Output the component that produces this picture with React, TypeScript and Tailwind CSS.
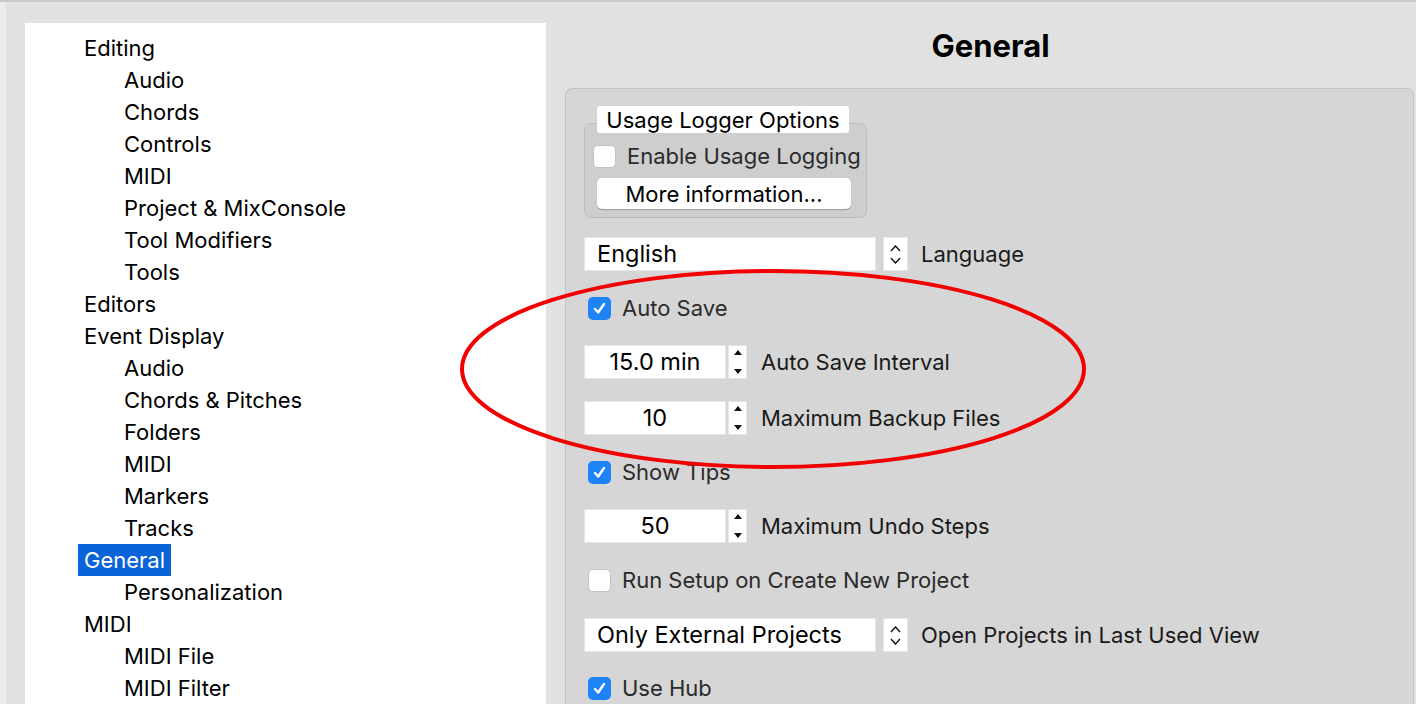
import React from "react";

type NavItem = { label: string; level: 0 | 1; selected?: boolean };

const nav: NavItem[] = [
  { label: "Editing", level: 0 },
  { label: "Audio", level: 1 },
  { label: "Chords", level: 1 },
  { label: "Controls", level: 1 },
  { label: "MIDI", level: 1 },
  { label: "Project & MixConsole", level: 1 },
  { label: "Tool Modifiers", level: 1 },
  { label: "Tools", level: 1 },
  { label: "Editors", level: 0 },
  { label: "Event Display", level: 0 },
  { label: "Audio", level: 1 },
  { label: "Chords & Pitches", level: 1 },
  { label: "Folders", level: 1 },
  { label: "MIDI", level: 1 },
  { label: "Markers", level: 1 },
  { label: "Tracks", level: 1 },
  { label: "General", level: 0, selected: true },
  { label: "Personalization", level: 1 },
  { label: "MIDI", level: 0 },
  { label: "MIDI File", level: 1 },
  { label: "MIDI Filter", level: 1 },
];

function Checkbox({ checked }: { checked?: boolean }) {
  if (checked) {
    return (
      <span className="flex h-[23px] w-[23px] shrink-0 items-center justify-center rounded-[5px] bg-[#1d83f6]">
        <svg width="15" height="15" viewBox="0 0 15 15">
          <path d="M3 8 L6.2 11.5 L12 3" fill="none" stroke="#fff" strokeWidth="2.4" strokeLinecap="round" strokeLinejoin="round" />
        </svg>
      </span>
    );
  }
  return <span className="h-[23px] w-[23px] shrink-0 rounded-[5px] border border-[#c2c2c2] bg-white" />;
}

function CheckRow({ label, checked }: { label: string; checked?: boolean }) {
  return (
    <div className="flex h-[34px] items-center gap-[11px] pl-[4px]">
      <Checkbox checked={checked} />
      <span className="text-[#2b2b2b]">{label}</span>
    </div>
  );
}

function SpinRow({ value, label }: { value: string; label: string }) {
  return (
    <div className="flex h-[34px] items-center">
      <div className="flex h-full w-[142px] items-center justify-center border border-[#e6e6e6] bg-white text-[23.5px] text-black">{value}</div>
      <div className="ml-[2px] flex h-full w-[19px] flex-col items-center justify-between border border-[#e6e6e6] bg-white py-[4px]">
        <svg width="8" height="5" viewBox="0 0 8 5">
          <path d="M0 5 L4 0 L8 5 Z" fill="#111" />
        </svg>
        <svg width="8" height="5" viewBox="0 0 8 5">
          <path d="M0 0 L4 5 L8 0 Z" fill="#111" />
        </svg>
      </div>
      <span className="ml-[14px] text-[#1a1a1a]">{label}</span>
    </div>
  );
}

function SelectRow({ value, label }: { value: string; label: string }) {
  return (
    <div className="flex h-[34px] items-center">
      <div className="flex h-full w-[292px] items-center border border-[#e6e6e6] bg-white pl-[12px] text-[23.5px] text-black">{value}</div>
      <div className="ml-[7px] flex h-full w-[25px] flex-col items-center justify-center gap-[5px] border border-[#e6e6e6] bg-white">
        <svg width="11" height="7" viewBox="0 0 11 7">
          <path d="M1 6 L5.5 1 L10 6" fill="none" stroke="#111" strokeWidth="1.4" />
        </svg>
        <svg width="11" height="7" viewBox="0 0 11 7">
          <path d="M1 1 L5.5 6 L10 1" fill="none" stroke="#111" strokeWidth="1.4" />
        </svg>
      </div>
      <span className="ml-[13px] text-[#1a1a1a]">{label}</span>
    </div>
  );
}

export default function App() {
  return (
    <div className="relative h-[704px] w-[1416px] overflow-hidden border-t-2 border-[#c9c9c9] bg-[#e1e1e1] font-['Inter','Noto_Sans',sans-serif] text-[22px] leading-none">
      <div className="flex h-full">
        <div className="w-[25px] shrink-0 border-l-[6px] border-[#ececec]" />

        <aside className="mt-[21px] w-[521px] shrink-0 bg-white pt-[9px] text-black">
          {nav.map((item, i) => (
            <div key={i} className={`flex h-[32px] items-center ${item.level === 0 ? "pl-[53px]" : "pl-[99px]"}`}>
              {item.selected ? (
                <span className="flex h-[32px] items-center bg-[#0b63d8] px-[6px] text-white">{item.label}</span>
              ) : (
                <span className={item.level === 0 ? "pl-[6px]" : ""}>{item.label}</span>
              )}
            </div>
          ))}
        </aside>

        <main className="ml-[19px] flex flex-1 flex-col">
          <header className="flex h-[86px] shrink-0 items-center justify-center">
            <h1 className="text-[31px] font-bold text-black">General</h1>
          </header>

          <section className="mr-[2px] flex-1 rounded-t-[7px] border border-b-0 border-[#c4c4c4] bg-[#d6d6d6] pl-[18px] pt-[17px]">
            <div className="flex flex-col">
              <div className="relative z-10 ml-[13px] flex h-[27px] w-[252px] items-center justify-center rounded-[3px] bg-white text-black">
                Usage Logger Options
              </div>
              <div className="-mt-[10px] flex h-[95px] w-[283px] flex-col rounded-[7px] border border-[#bdbdbd] bg-[#cecece] pl-[4px] pt-[15px]">
                <CheckRow label="Enable Usage Logging" />
                <button className="ml-[8px] mt-[5px] h-[31px] w-[254px] rounded-[5px] bg-white text-black shadow-[0_1px_1px_rgba(0,0,0,0.25)]">
                  More information...
                </button>
              </div>
            </div>

            <div className="mt-[19px] flex flex-col gap-[20px]">
              <SelectRow value="English" label="Language" />
              <CheckRow label="Auto Save" checked />
              <SpinRow value="15.0 min" label="Auto Save Interval" />
              <div className="mt-[2px]">
                <SpinRow value="10" label="Maximum Backup Files" />
              </div>
              <CheckRow label="Show Tips" checked />
              <SpinRow value="50" label="Maximum Undo Steps" />
              <CheckRow label="Run Setup on Create New Project" />
              <div className="mt-[1px]">
                <SelectRow value="Only External Projects" label="Open Projects in Last Used View" />
              </div>
              <div className="-mt-[1px]">
                <CheckRow label="Use Hub" checked />
              </div>
            </div>
          </section>
        </main>
      </div>

      <svg className="pointer-events-none absolute left-0 top-0" width="1416" height="704" viewBox="0 0 1416 704">
        <ellipse cx="773" cy="367" rx="311" ry="98" fill="none" stroke="#f20000" strokeWidth="4" />
      </svg>
    </div>
  );
}
